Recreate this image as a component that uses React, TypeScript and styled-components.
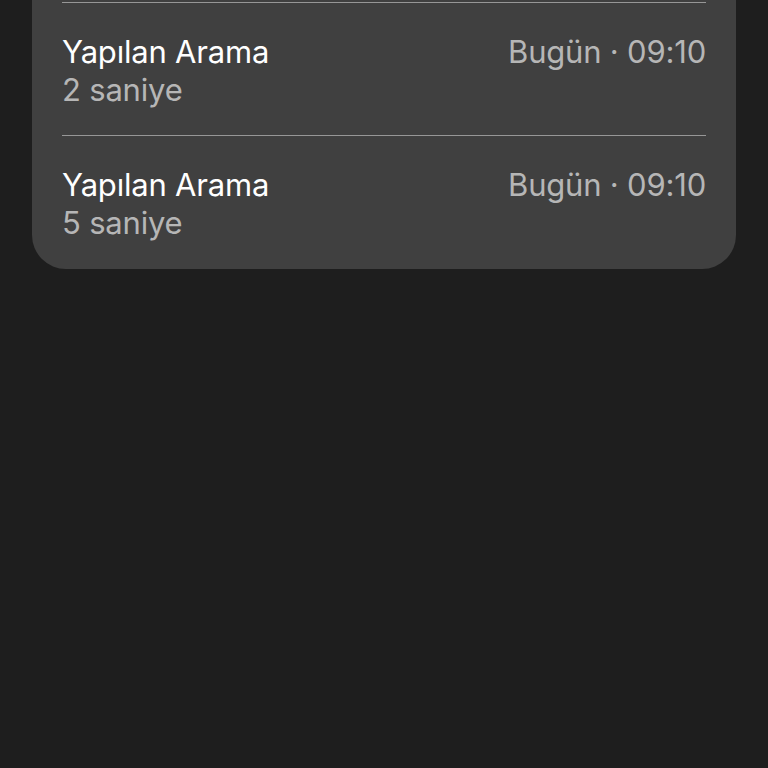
import React from "react";
import styled, { createGlobalStyle } from "styled-components";

const Global = createGlobalStyle`
  html, body { margin: 0; padding: 0; background: #1e1e1e; }
  body { font-family: Inter, "Noto Sans", sans-serif; -webkit-font-smoothing: antialiased; }
`;

const Page = styled.div`
  min-height: 768px;
  background: #1e1e1e;
  padding: 0 32px;
`;

const Card = styled.div`
  background: #404040;
  border-radius: 0 0 34px 34px;
  padding: 2px 30px 1px;
`;

const Row = styled.div<{ $divider: boolean }>`
  display: flex;
  justify-content: space-between;
  align-items: flex-start;
  padding: 31px 0 27px;
  border-top: ${(p) => (p.$divider ? "1.5px solid #979797" : "none")};
`;

const Left = styled.div`
  display: flex;
  flex-direction: column;
  gap: 2px;
`;

const Text = styled.div<{ $tone: "primary" | "secondary" }>`
  color: ${(p) => (p.$tone === "primary" ? "#ffffff" : "#b6b6b6")};
  font-size: 31px;
  line-height: 36px;
  letter-spacing: -0.2px;
  white-space: nowrap;
`;

const calls = [
  { title: "Yapılan Arama", dur: "2 saniye", time: "Bugün · 09:10" },
  { title: "Yapılan Arama", dur: "5 saniye", time: "Bugün · 09:10" },
];

export default function App() {
  return (
    <>
      <Global />
      <Page>
        <Card>
          {calls.map((c, i) => (
            <Row key={i} $divider={true}>
              <Left>
                <Text $tone="primary">{c.title}</Text>
                <Text $tone="secondary">{c.dur}</Text>
              </Left>
              <Text $tone="secondary">{c.time}</Text>
            </Row>
          ))}
        </Card>
      </Page>
    </>
  );
}
